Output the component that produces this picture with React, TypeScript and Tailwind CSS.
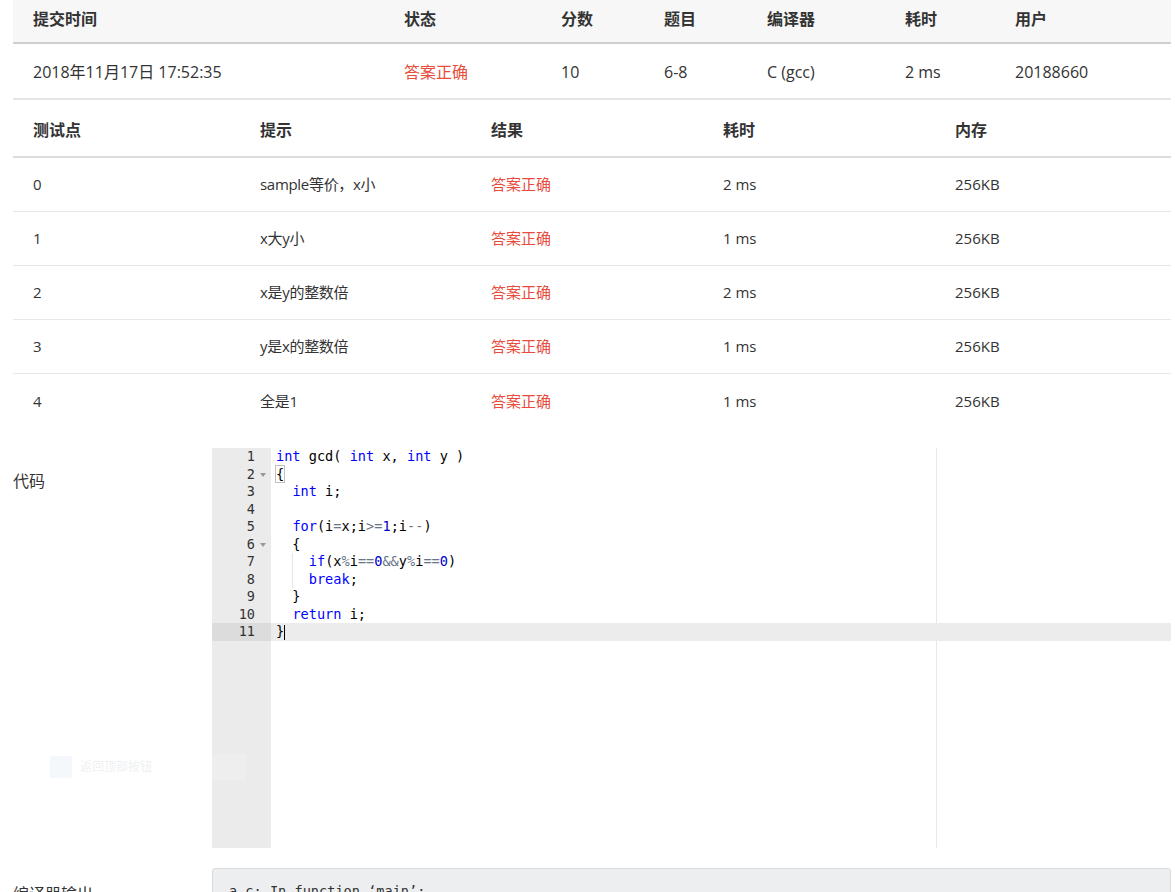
import React from 'react';

const font = { fontFamily: '"Open Sans", "Noto Sans CJK SC", sans-serif' };

const subCols = ['提交时间', '状态', '分数', '题目', '编译器', '耗时', '用户'];
const subWidths = ['w-[371px]', 'w-[157px]', 'w-[103px]', 'w-[103px]', 'w-[138px]', 'w-[110px]', 'flex-1'];

const caseCols = ['测试点', '提示', '结果', '耗时', '内存'];
const caseWidths = ['w-[227px]', 'w-[231px]', 'w-[232px]', 'w-[232px]', 'flex-1'];

const cases = [
    ['0', 'sample等价，x小', '2 ms'],
    ['1', 'x大y小', '1 ms'],
    ['2', 'x是y的整数倍', '2 ms'],
    ['3', 'y是x的整数倍', '1 ms'],
    ['4', '全是1', '1 ms'],
];

const K = ({children}: {children: React.ReactNode}) => <span className="text-[#0000ff]">{children}</span>;
const N = ({children}: {children: React.ReactNode}) => <span className="text-[#0000cd]">{children}</span>;
const O = ({children}: {children: React.ReactNode}) => <span className="text-[#687687]">{children}</span>;

const codeLines: React.ReactNode[] = [
    <><K>int</K> gcd( <K>int</K> x, <K>int</K> y )</>,
    <><span className="outline outline-1 outline-[#c0c0c0]">{'{'}</span></>,
    <>{'  '}<K>int</K> i;</>,
    <></>,
    <>{'  '}<K>for</K>(i<O>=</O>x;i<O>&gt;=</O><N>1</N>;i<O>--</O>)</>,
    <>{'  {'}</>,
    <>{'    '}<K>if</K>(x<O>%</O>i<O>==</O><N>0</N><O>&amp;&amp;</O>y<O>%</O>i<O>==</O><N>0</N>)</>,
    <>{'    '}<K>break</K>;</>,
    <>{'  }'}</>,
    <>{'  '}<K>return</K> i;</>,
    <>{'}'}<span className="inline-block w-px h-[15px] align-middle bg-black"/></>,
];

export default function App() {
    return (
        <div className="relative bg-white min-h-[892px] text-[16px] text-[#333]" style={font}>
            <div className="ml-[13px] w-[1158px]">
                {/* submission table */}
                <div className="flex h-[44px] items-center bg-[#f7f7f7] border-b-2 border-[#cfcfcf] font-bold">
                    {subCols.map((c, i) => (
                        <div key={c} className={`${subWidths[i]} pl-[20px] pb-[4px]`}>{c}</div>
                    ))}
                </div>
                <div className="flex h-[56px] items-center border-b-2 border-[#e6e6e6]">
                    <div className="w-[371px] pl-[20px] pt-[2px]">2018年11月17日 17:52:35</div>
                    <div className="w-[157px] pl-[20px] pt-[2px] text-[#e74c3c]">答案正确</div>
                    <div className="w-[103px] pl-[20px] pt-[2px]">10</div>
                    <div className="w-[103px] pl-[20px] pt-[2px]">6-8</div>
                    <div className="w-[138px] pl-[20px] pt-[2px]">C (gcc)</div>
                    <div className="w-[110px] pl-[20px] pt-[2px]">2 ms</div>
                    <div className="flex-1 pl-[20px] pt-[2px]">20188660</div>
                </div>

                {/* test cases */}
                <div className="flex h-[58px] items-center border-b-2 border-[#dcdcdc] font-bold text-[16px]">
                    {caseCols.map((c, i) => (
                        <div key={c} className={`${caseWidths[i]} pl-[20px] pt-[3px]`}>{c}</div>
                    ))}
                </div>
                {cases.map(([id, hint, time], r) => (
                    <div key={id} className={`flex h-[54px] items-center text-[15px] ${r < cases.length - 1 ? 'border-b border-[#e8e8e8]' : ''}`}>
                        <div className="w-[227px] pl-[20px]">{id}</div>
                        <div className="w-[231px] pl-[20px] tracking-[-0.3px]">{hint}</div>
                        <div className="w-[232px] pl-[20px] text-[#e74c3c]">答案正确</div>
                        <div className="w-[232px] pl-[20px]">{time}</div>
                        <div className="flex-1 pl-[20px]">256KB</div>
                    </div>
                ))}
            </div>

            {/* code */}
            <div className="flex mt-[20px] ml-[13px]">
                <div className="w-[199px] pt-[21px] text-[16px]">代码</div>
                <div className="relative flex w-[959px] h-[400px] bg-white" style={{fontFamily: '"DejaVu Sans Mono", monospace'}}>
                    <div className="w-[59px] h-full bg-[#ebebeb] text-[#333] text-[13.5px]">
                        {codeLines.map((_, i) => (
                            <div key={i} className={`relative h-[17.5px] leading-[17.5px] text-right pr-[16px] ${i === 10 ? 'bg-[#dcdcdc]' : ''}`}>
                                {i + 1}
                                {(i === 1 || i === 5) && (
                                    <span className="absolute right-[5px] top-[7px] w-0 h-0 border-l-[3px] border-r-[3px] border-t-[4px] border-l-transparent border-r-transparent border-t-[#999]"/>
                                )}
                            </div>
                        ))}
                    </div>
                    <div className="relative flex-1 text-[13.6px] text-black">
                        <div className="absolute left-[665px] top-0 bottom-0 w-px bg-[#e8e8e8]"/>
                        <div className="absolute left-[21px] top-[105px] h-[35px] w-px bg-[#e6e6e6]"/>
                        {codeLines.map((l, i) => (
                            <div key={i} className={`relative h-[17.5px] leading-[17.5px] pl-[5px] whitespace-pre ${i === 10 ? 'bg-[#ececec]' : ''}`}>
                                {l}
                            </div>
                        ))}
                    </div>
                </div>
            </div>

            {/* faded toast */}
            <div className="absolute left-[50px] top-[754px] flex items-center gap-[8px] w-[196px] h-[26px] bg-white/60 opacity-30">
                <div className="w-[22px] h-[22px] bg-[#dbe9f7]"/>
                <span className="text-[12px] text-[#c7cfd8]">返回顶部按钮</span>
            </div>

            {/* compiler output */}
            <div className="flex mt-[20px] ml-[13px]">
                <div className="w-[199px] pt-[14px] text-[16px]">编译器输出</div>
                <div className="w-[959px] h-[80px] bg-[#eceef0] border border-[#d9dcdf] rounded-[3px] px-[16px] pt-[12px] text-[13.6px] text-[#333]" style={{fontFamily: '"DejaVu Sans Mono", monospace'}}>
                    a.c: In function ‘main’:
                </div>
            </div>
        </div>
    );
}
